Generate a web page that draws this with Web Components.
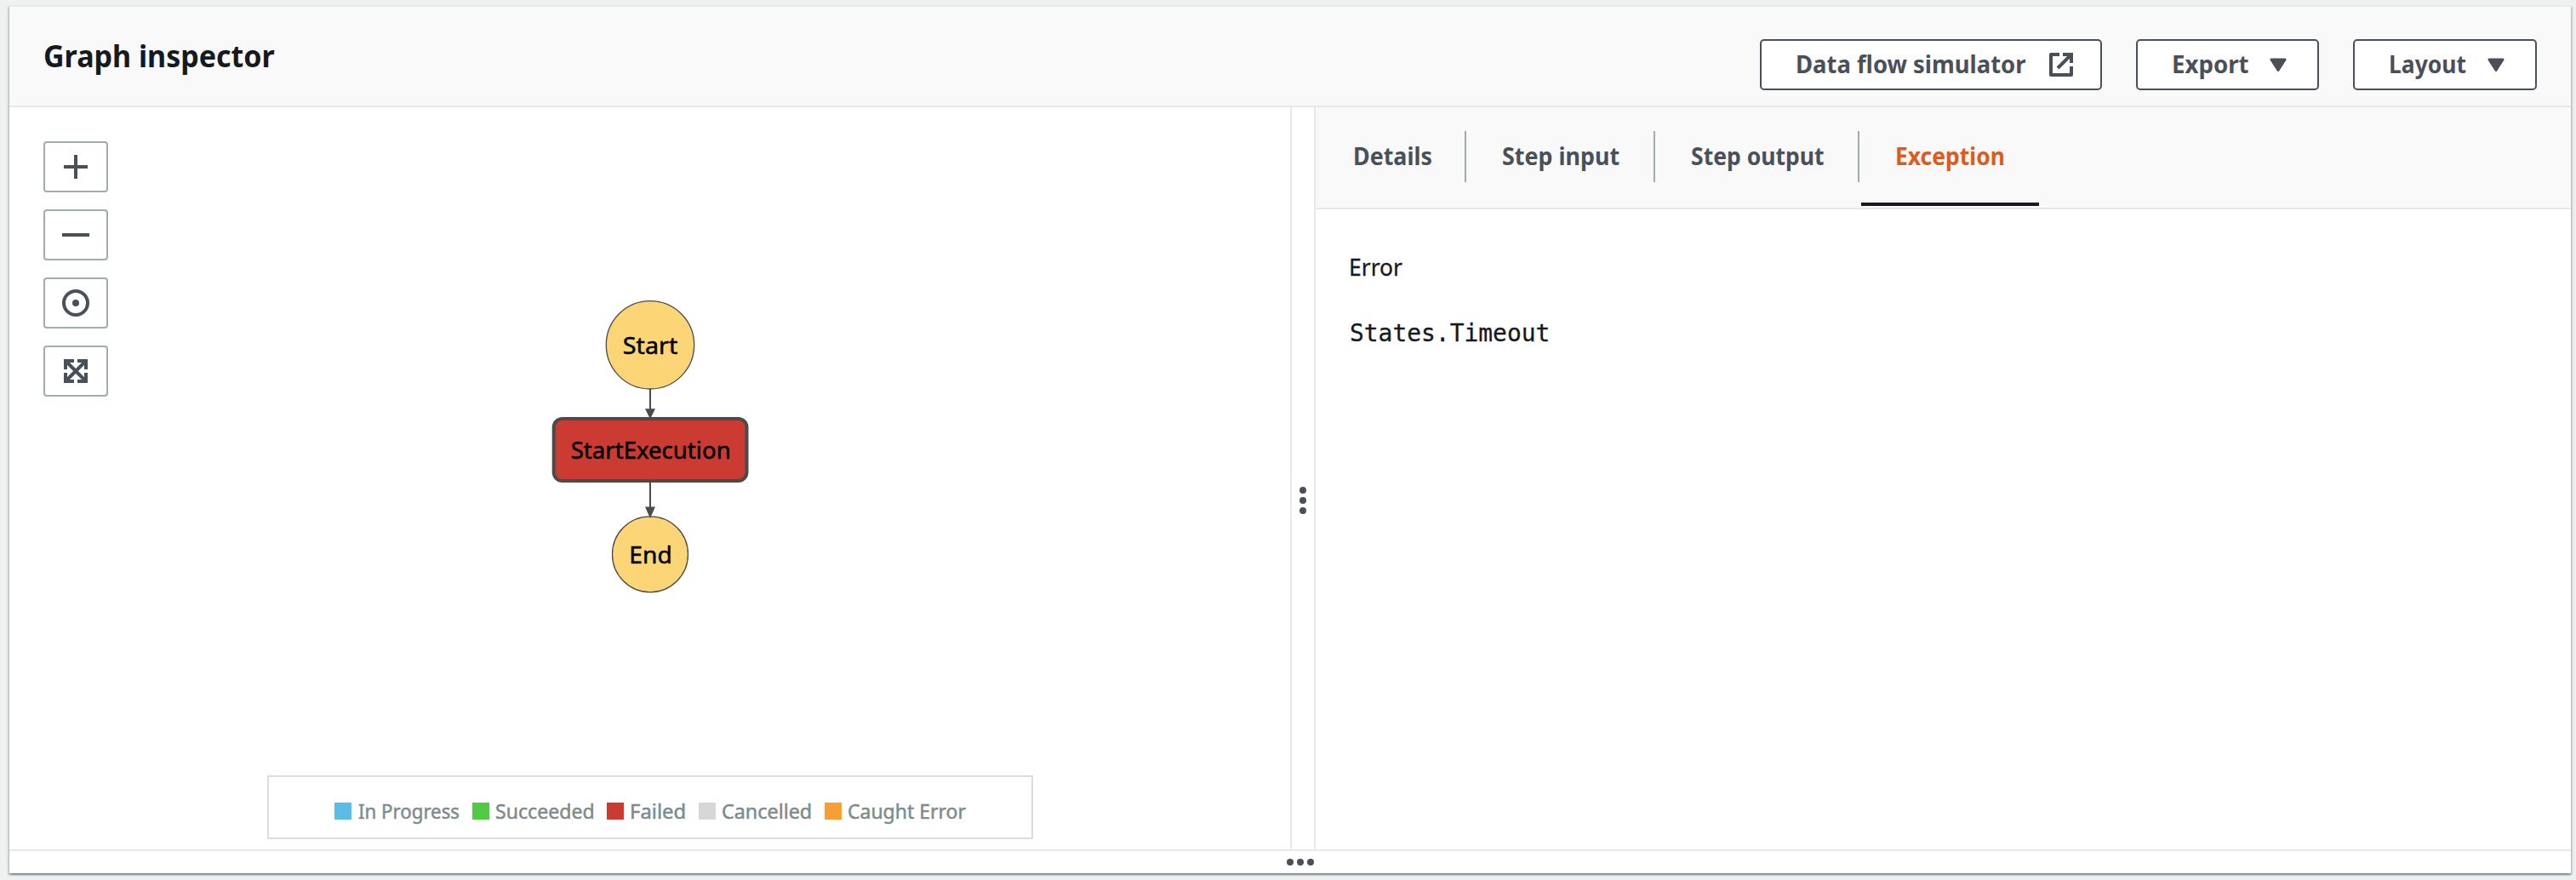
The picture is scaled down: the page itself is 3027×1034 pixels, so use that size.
<!DOCTYPE html>
<html lang="en">
<head>
<meta charset="utf-8">
<title>Graph inspector</title>
<style>
html,body{margin:0;height:100%}
body{background:#eff1f0;font-family:"Noto Sans","Open Sans",sans-serif;color:#16191f;overflow:hidden}
</style>
</head>
<body>
<graph-inspector></graph-inspector>
<script>
const ctx = document.createElement('canvas').getContext('2d');
function define(name, html, setup) {
  const tpl = document.createElement('template');
  tpl.innerHTML = html;
  customElements.define(name, class extends HTMLElement {
    connectedCallback() {
      if (this.shadowRoot) return;
      this.attachShadow({mode: 'open'}).append(tpl.content.cloneNode(true));
      if (setup) setup(this, this.shadowRoot);
    }
  });
}

// A label whose ink is set to an exact width.
define('fit-text', `<style>
:host{display:block;flex:none;white-space:nowrap}
span{display:inline-block;transform-origin:0 0}
</style><span></span>`, (el, root) => {
  const s = root.querySelector('span');
  s.textContent = el.getAttribute('text');
  const w = +el.getAttribute('w');
  const cs = getComputedStyle(el);
  ctx.font = cs.fontWeight + ' ' + cs.fontSize + ' ' + cs.fontFamily;
  const m = ctx.measureText(s.textContent);
  const k = w / (m.actualBoundingBoxLeft + m.actualBoundingBoxRight);
  el.style.width = w + 'px';
  s.style.transform = 'scaleX(' + k + ')';
  s.style.marginLeft = m.actualBoundingBoxLeft * k + 'px';
});

define('action-button', `<style>
:host{display:flex;box-sizing:border-box;height:60px;border:2px solid #4a505a;border-radius:5px;background:#fff;color:#4a505a;font-weight:700;font-size:28px;line-height:55px;padding-left:42px}
::slotted(svg){display:block;flex:none}
</style><slot></slot>`);

define('tool-button', `<style>
:host{display:flex;box-sizing:border-box;width:76px;height:60px;border:2px solid #a0adae;border-radius:4px;background:#fff;align-items:center;justify-content:center}
</style><slot></slot>`);

define('legend-item', `<style>
:host{display:flex;color:#7e8b8c;font-size:24px;line-height:36px;-webkit-text-stroke:.5px #7e8b8c}
i{display:block;width:20px;height:20px;margin:8px 8px 0 0}
</style><i></i><slot></slot>`, (el, root) => {
  root.querySelector('i').style.background = el.getAttribute('color');
});

define('tab-item', `<style>
:host{display:flex;flex:none;box-sizing:border-box;height:118px;padding-top:28px;color:#4a505a;font-weight:700;font-size:28px;line-height:59px}
:host([active]){color:#dd5b20;border-bottom:4px solid #16191f;height:116px}
div{height:60px;box-sizing:border-box;border-right:2px solid #a0adae;padding:0 39.5px 0 43px}
:host([active]) div{border-right:0;padding:0 40.5px 0 42.5px}
</style><div><slot></slot></div>`);

define('step-graph', `<style>
:host{display:block}
svg{display:block}
text{font-size:28px;fill:#000;stroke:#000;stroke-width:.5px}
</style>
<svg width="1505" height="872" viewBox="11 126 1505 872">
 <g stroke="#4b4b4b" fill="#fcd577">
  <circle cx="764" cy="405.3" r="51.7" stroke-width="1.3"/>
  <path d="M764 457V482M764 567V597" stroke-width="2"/>
  <rect x="650.7" y="492" width="226.8" height="73" rx="10" fill="#cb3b31" stroke-width="4"/>
  <circle cx="764" cy="651.3" r="44.5" stroke-width="1.3"/>
 </g>
 <path d="M758 480.3h12l-6 12zM758 595.5h12l-6 13.5z" fill="#4b4b4b"/>
 <g>
 <text x="731.8" y="416" textLength="64.5" lengthAdjust="spacingAndGlyphs">Start</text>
 <text x="670.7" y="539.3" textLength="188" lengthAdjust="spacingAndGlyphs">StartExecution</text>
 <text x="739.3" y="662" textLength="50.5" lengthAdjust="spacingAndGlyphs">End</text></g>
</svg>`);

define('graph-pane', `<style>
:host{display:flex;flex-direction:column;justify-content:space-between;position:relative;width:1505px;box-sizing:border-box;padding:40px 0 12px 40px}
step-graph{position:absolute;inset:0}
.tools{display:flex;flex-direction:column;gap:20px;position:relative;width:76px}
.legend{display:flex;box-sizing:border-box;width:900px;height:75px;border:2px solid #dcdddd;margin-left:263px;padding:22px 0 0 77px;position:relative}
svg{display:block}
</style>
<step-graph></step-graph>
<div class="tools">
 <tool-button><svg width="32" height="32" stroke="#4a505a" stroke-width="4"><path d="M2 16H30M16 2V30"/></svg></tool-button>
 <tool-button><svg width="32" height="32" stroke="#4a505a" stroke-width="4"><path d="M0 16H32"/></svg></tool-button>
 <tool-button><svg width="32" height="32" stroke="#4a505a" stroke-width="4" fill="none"><circle cx="16" cy="16" r="14"/><circle cx="16" cy="16" r="4" fill="#4a505a" stroke="none"/></svg></tool-button>
 <tool-button><svg width="32" height="32" stroke="#4a505a" stroke-width="4" fill="none"><path d="M4 14V4H14M18 4H28V14M28 18V28H18M14 28H4V18M4 4L28 28M28 4L4 28"/></svg></tool-button>
</div>
<div class="legend">
 <legend-item color="#5bbde6" style="width:162px"><fit-text text="In Progress" w="118.5"></fit-text></legend-item>
 <legend-item color="#52ca43" style="width:158px"><fit-text text="Succeeded" w="114"></fit-text></legend-item>
 <legend-item color="#cb3b31" style="width:108px"><fit-text text="Failed" w="62.5" style="margin-left:1px"></fit-text></legend-item>
 <legend-item color="#d7d7d7" style="width:148px"><fit-text text="Cancelled" w="103.5"></fit-text></legend-item>
 <legend-item color="#f69f33"><fit-text text="Caught Error" w="138"></fit-text></legend-item>
</div>`);

define('detail-pane', `<style>
:host{display:block;flex:1}
nav{display:flex;height:118px;background:#f9f9f9;border-bottom:2px solid #e5e9e8}
.body{display:flex;flex-direction:column;gap:19px;padding:37px 0 0 41px;font-size:28px;line-height:60px;-webkit-text-stroke:.3px #16191f}
code{font-family:"DejaVu Sans Mono","Liberation Mono",monospace}
</style>
<nav>
 <tab-item style="margin-left:2.5px"><fit-text text="Details" w="90"></fit-text></tab-item>
 <tab-item><fit-text text="Step input" w="137"></fit-text></tab-item>
 <tab-item><fit-text text="Step output" w="155.5"></fit-text></tab-item>
 <tab-item active style="margin-left:2px"><fit-text text="Exception" w="126"></fit-text></tab-item>
</nav>
<div class="body"><fit-text text="Error" w="61.5"></fit-text><code><fit-text text="States.Timeout" w="232.5"></fit-text></code></div>`);

define('graph-inspector', `<style>
:host{display:flex;flex-direction:column;box-sizing:border-box;width:3010px;height:1020px;margin:6px 0 0 11px;border-top:2px solid #e5e9e8;background:#fff;
box-shadow:0 2px 2px 0 rgba(0,28,36,.3),2px 2px 2px 0 rgba(0,28,36,.15),-2px 2px 2px 0 rgba(0,28,36,.15)}
header{display:flex;justify-content:space-between;height:116px;background:#f9f9f9;border-bottom:2px solid #e5e9e8}
h2{margin:0;font-size:35.5px;line-height:60px;padding:27px 0 0 42px;color:#16191f}
.actions{display:flex;padding:38px 40px 0 0}
main{display:flex;height:872px}
.split{display:flex;flex-direction:column;align-items:center;box-sizing:border-box;width:30px;border:solid #e5e9e8;border-width:0 2px;padding-top:446px}
footer{display:flex;height:26px;border-top:2px solid #e5e9e8;padding-left:1501px}
svg{display:block}
</style>
<header><h2><fit-text text="Graph inspector" w="270"></fit-text></h2>
<div class="actions">
 <action-button style="width:402px;margin-right:40px"><fit-text text="Data flow simulator" w="269"></fit-text>
  <svg width="28" height="28" style="margin:14px 0 0 27px" fill="none" stroke="#4a505a" stroke-width="4"><path d="M12 2H2V26H26V16" stroke-linejoin="round"/><path d="M16 2H26V12M26 2L10 18"/></svg></action-button>
 <action-button style="width:215px;margin-right:40px"><fit-text text="Export" w="88.5"></fit-text>
  <svg width="20" height="16" style="margin:20px 0 0 24.5px"><path d="M2 2H18L10 14.5Z" fill="#4a505a" stroke="#4a505a" stroke-width="3" stroke-linejoin="round"/></svg></action-button>
 <action-button style="width:216px"><fit-text text="Layout" w="89"></fit-text>
  <svg width="20" height="16" style="margin:20px 0 0 25px"><path d="M2 2H18L10 14.5Z" fill="#4a505a" stroke="#4a505a" stroke-width="3" stroke-linejoin="round"/></svg></action-button>
</div></header>
<main><graph-pane></graph-pane>
 <div class="split"><svg width="8" height="32" fill="#4a505a"><circle cx="4" cy="4" r="4"/><circle cx="4" cy="16" r="4"/><circle cx="4" cy="28" r="4"/></svg></div>
 <detail-pane></detail-pane></main>
<footer><svg width="32" height="8" fill="#4a505a" style="margin-top:9px"><circle cx="4" cy="4" r="4"/><circle cx="16" cy="4" r="4"/><circle cx="28" cy="4" r="4"/></svg></footer>`);
</script>
</body>
</html>
